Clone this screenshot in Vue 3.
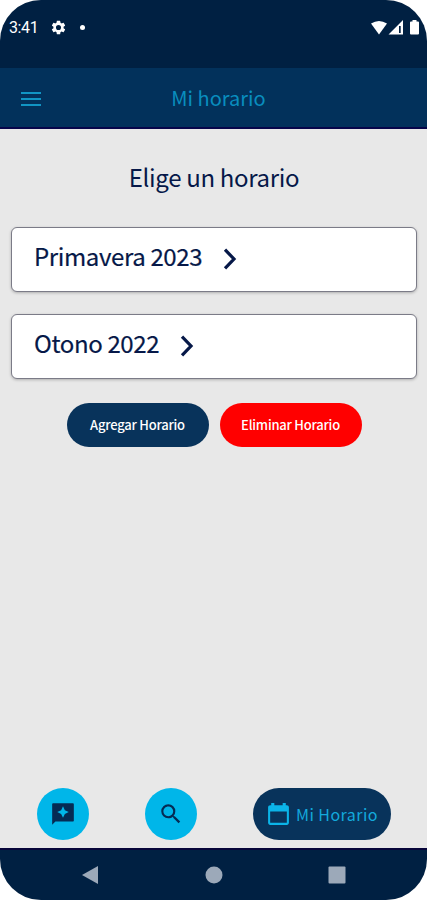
<template>
  <div class="phone">
    <header class="status-bar">
      <span class="time">3:41</span>
      <svg class="gear" viewBox="0 0 24 24">
        <path
          fill="currentColor"
          d="M19.14 12.94c.04-.3.06-.61.06-.94 0-.32-.02-.64-.07-.94l2.03-1.58a.49.49 0 0 0 .12-.61l-1.92-3.32a.49.49 0 0 0-.59-.22l-2.39.96c-.5-.38-1.03-.7-1.62-.94l-.36-2.54a.48.48 0 0 0-.48-.41h-3.84c-.24 0-.43.17-.47.41l-.36 2.54c-.59.24-1.13.57-1.62.94l-2.39-.96a.48.48 0 0 0-.59.22L2.74 8.87c-.12.21-.08.47.12.61l2.03 1.58c-.05.3-.09.63-.09.94s.02.64.07.94l-2.03 1.58a.49.49 0 0 0-.12.61l1.92 3.32c.12.22.37.29.59.22l2.39-.96c.5.38 1.03.7 1.62.94l.36 2.54c.05.24.24.41.48.41h3.84c.24 0 .44-.17.47-.41l.36-2.54c.59-.24 1.13-.56 1.62-.94l2.39.96c.22.08.47 0 .59-.22l1.92-3.32a.48.48 0 0 0-.12-.61l-2.01-1.58zM12 15.6A3.6 3.6 0 1 1 12 8.4a3.6 3.6 0 0 1 0 7.2z"
        />
      </svg>
      <span class="dot"></span>
      <svg class="signals" viewBox="0 0 50 16">
        <path fill="#fff" d="M0 3.6Q8-1.6 16 3.6L8 14.5Z" />
        <path fill="#fff" fill-rule="evenodd" d="M17.5 14.5 32 0V14.5ZM28 6V13H29.7V6Z" />
        <path fill="#fff" d="M39 2.5Q39 1.5 40 1.5H41.5V0H45.5V1.5H47Q48 1.5 48 2.5V13.5Q48 14.5 47 14.5H40Q39 14.5 39 13.5Z" />
      </svg>
    </header>

    <div class="app-bar">
      <button class="menu" aria-label="Menú">
        <span></span>
        <span></span>
        <span></span>
      </button>
      <h1>Mi horario</h1>
    </div>

    <main>
      <h2>Elige un horario</h2>
      <div v-for="h in horarios" :key="h" class="card">
        <span>{{ h }}</span>
        <svg class="chevron" viewBox="0 0 14 22">
          <path d="M2 1.7 11 11 2 20.3" fill="none" stroke="currentColor" stroke-width="3.2" />
        </svg>
      </div>
      <div class="actions">
        <button class="btn">Agregar Horario</button>
        <button class="btn btn-danger">Eliminar Horario</button>
      </div>
    </main>

    <nav class="tabs">
      <button class="tab" aria-label="Reseñas">
        <svg viewBox="0 0 24 24">
          <path
            fill="currentColor"
            fill-rule="evenodd"
            d="M21 2H3c-.6 0-1 .4-1 1L2 22l3-3h16c.6 0 1-.4 1-1V3c0-.6-.4-1-1-1zM13.7 11.9 12 15.500l-1.700-3.600L6.700 10.200l3.600-1.700L12 4.900l1.700 3.600 3.600 1.700z"
          />
        </svg>
      </button>
      <button class="tab" aria-label="Buscar">
        <svg viewBox="0 0 24 24">
          <path
            fill="currentColor"
            d="M15.5 14h-.79l-.28-.27A6.47 6.47 0 0 0 16 9.5 6.5 6.5 0 1 0 9.5 16c1.61 0 3.09-.59 4.23-1.57l.27.28v.79l5 4.99L20.49 19l-4.99-5zm-6 0C7.01 14 5 11.99 5 9.5S7.01 5 9.5 5 14 7.01 14 9.5 11.99 14 9.5 14z"
          />
        </svg>
      </button>
      <button class="tab tab-active">
        <svg viewBox="0 0 24 24">
          <path
            fill="currentColor"
            d="M20 3h-1V1h-3v2H8V1H5v2H4c-1.100 0-2 .9-2 2v15c0 1.100.9 2 2 2h16c1.100 0 2-.9 2-2V5c0-1.100-.9-2-2-2zm0 17H4V9h16v11z"
          />
        </svg>
        <span>Mi Horario</span>
      </button>
    </nav>

    <footer class="system-nav">
      <svg viewBox="0 0 18 20"><path d="M1 10 17 1V19Z" /></svg>
      <svg viewBox="0 0 18 20"><circle cx="9" cy="10" r="8.5" /></svg>
      <svg viewBox="0 0 18 20"><rect x="0.5" y="1.5" width="17" height="17" rx="1" /></svg>
    </footer>
  </div>
</template>

<script setup>
const horarios = ['Primavera 2023', 'Otono 2022']
</script>

<style>
body {
  background: #fff;
}
</style>

<style scoped>
.phone {
  display: flex;
  flex-direction: column;
  height: 900px;
  overflow: hidden;
  border-radius: 41px;
  background: #e8e8e8;
  color: #061848;
  font-family: 'Noto Sans CJK JP', 'Noto Sans', sans-serif;
}

button {
  border: none;
  padding: 0;
  font-family: inherit;
}

.status-bar {
  display: flex;
  align-items: center;
  box-sizing: border-box;
  height: 68px;
  padding: 0 6px 13px 9px;
  background: #002042;
  color: #fff;
}

.time {
  width: 41px;
  font: 400 16px/20px Roboto, sans-serif;
  letter-spacing: -0.4px;
}

.gear {
  width: 17px;
  height: 17px;
}

.dot {
  width: 5px;
  height: 5px;
  margin-left: 13px;
  border-radius: 50%;
  background: #fff;
}

.signals {
  width: 50px;
  height: 16px;
  margin-left: auto;
}

.app-bar {
  display: grid;
  grid-template-columns: 60px 1fr 50px;
  align-items: center;
  box-sizing: border-box;
  height: 61px;
  border-bottom: 2px solid #07054a;
  background: #02315b;
}

.menu {
  display: flex;
  flex-direction: column;
  gap: 4px;
  width: 20px;
  margin: 2px 0 0 21px;
  background: none;
}

.menu span {
  height: 2px;
  background: #1195c4;
}

h1 {
  margin: 0;
  color: #098dbe;
  font-size: 20px;
  font-weight: 400;
  line-height: 30px;
  text-align: center;
}

main {
  flex: 1;
  padding: 30px 10px 0 11px;
}

h2 {
  margin: 0 0 32px;
  font-size: 24px;
  font-weight: 400;
  line-height: 36px;
  letter-spacing: -0.33px;
  text-align: center;
}

.card {
  display: flex;
  align-items: center;
  gap: 21px;
  box-sizing: border-box;
  height: 65px;
  margin-bottom: 22px;
  padding: 0 0 8px 22px;
  border: 1px solid #7b7b87;
  border-radius: 6px;
  background: #fff;
  box-shadow: 0 1px 3px rgba(0, 0, 0, 0.25);
  font-size: 24px;
  line-height: 36px;
  letter-spacing: -0.37px;
  -webkit-text-stroke: 0.2px #061848;
}

.chevron {
  width: 14px;
  height: 22px;
  margin-top: 7px;
}

.actions {
  display: flex;
  justify-content: center;
  gap: 11px;
  padding-top: 2px;
}

.btn {
  width: 142px;
  height: 44px;
  padding-bottom: 2px;
  border-radius: 22px;
  background: #08335b;
  color: #fff;
  font-size: 13px;
  font-weight: 500;
  letter-spacing: -0.22px;
}

.btn-danger {
  background: #f00;
}

.tabs {
  display: flex;
  align-items: center;
  justify-content: space-between;
  padding: 0 36px 8px 37px;
}

.tab {
  display: flex;
  align-items: center;
  justify-content: center;
  width: 52px;
  height: 52px;
  border-radius: 26px;
  background: #00b6e9;
  color: #052b54;
}

.tab svg {
  width: 26px;
  height: 26px;
}

.tab-active {
  gap: 5px;
  width: 138px;
  background: #08335b;
  color: #13a9dc;
  font-size: 16px;
  letter-spacing: 0.45px;
}

.tab-active svg {
  width: 25px;
  height: 25px;
  color: #0bb4e8;
}

.tab-active span {
  margin-top: -1px;
}

.system-nav {
  display: flex;
  align-items: center;
  justify-content: space-between;
  box-sizing: border-box;
  height: 52px;
  padding: 0 81px;
  border-top: 2px solid #07053a;
  background: #002042;
}

.system-nav svg {
  width: 18px;
  height: 20px;
  fill: #9ca9b9;
}
</style>
